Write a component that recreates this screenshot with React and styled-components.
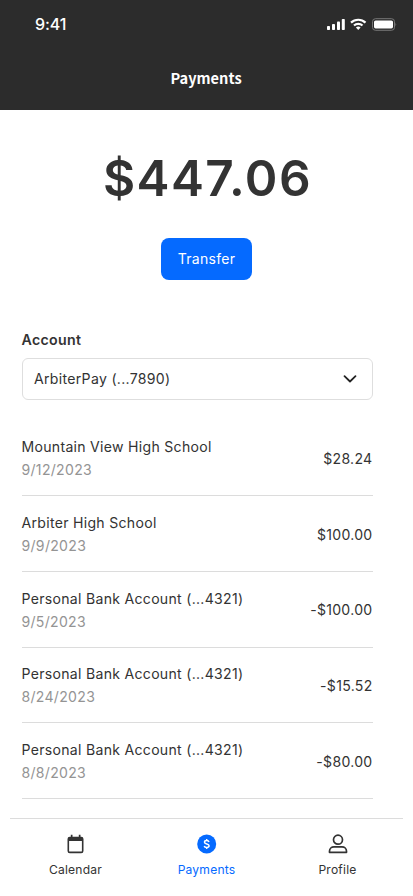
import React from 'react'
import styled, { createGlobalStyle } from 'styled-components'

const GlobalStyle = createGlobalStyle`
* { box-sizing: border-box; }
body {
    margin: 0;
    background: #fff;
    color: #333;
    font-family: Inter, "Liberation Sans", sans-serif;
}
`

const Screen = styled.div`
display: flex;
flex-direction: column;
width: 413px;
height: 896px;
overflow: hidden;
`

const Header = styled.header`
flex: none;
height: 109.5px;
background: #2c2c2c;
color: #fff;
`

const StatusBar = styled.div`
display: flex;
align-items: center;
justify-content: space-between;
height: 48px;
padding: 0 16px 0 35px;
`

const Clock = styled.span`
font-size: 16px;
font-weight: 500;
letter-spacing: -0.1px;
`

const StatusIcons = styled.svg`
display: block;
width: 72px;
height: 16px;
`

const Title = styled.h1`
margin: 0;
text-align: center;
font-family: "Noto Sans CJK JP", "Noto Sans", sans-serif;
font-size: 14.6px;
font-weight: 700;
line-height: 24px;
padding: 18px 1px 0 0;
`

const Main = styled.main`
flex: 1;
padding: 40.5px 40.5px 0 21.5px;
`

const Summary = styled.section`
display: flex;
flex-direction: column;
align-items: center;
margin: 0 -40.5px 0 -21.5px;
`

const Balance = styled.div`
padding-left: 2px;
font-size: 49.5px;
font-weight: 600;
line-height: 56px;
letter-spacing: 1.4px;
`

const TransferButton = styled.button`
width: 91px;
height: 42px;
margin-top: 31.5px;
padding: 0;
border: 0;
border-radius: 8px;
background: #056aff;
color: #fff;
font-family: inherit;
font-size: 14px;
letter-spacing: 0.3px;
`

const Label = styled.div`
margin-top: 50px;
font-size: 14.2px;
font-weight: 600;
line-height: 20px;
letter-spacing: 0.3px;
`

const Select = styled.div`
display: flex;
align-items: center;
justify-content: space-between;
height: 42px;
margin-top: 8px;
padding: 0 14px 0 11.5px;
border: 1px solid #dedede;
border-radius: 6px;
font-size: 14.1px;
letter-spacing: 0.3px;
`

const List = styled.div`
margin-top: 21px;
`

const Row = styled.div`
display: flex;
align-items: center;
justify-content: space-between;
height: 75.7px;
padding-top: 1px;
border-bottom: 1px solid #dcdcdc;
font-size: 14.05px;
line-height: 23px;
letter-spacing: 0.3px;
`

const PaymentDate = styled.div`
color: #949494;
`

const TabBar = styled.nav`
flex: none;
display: flex;
height: 78.5px;
margin: 0 10px;
padding-top: 15px;
border-top: 1px solid #dcdcdc;
background: #fff;
`

const Tab = styled.div`
flex: 1;
display: flex;
flex-direction: column;
align-items: center;
color: ${p => p.$active ? '#056aff' : '#333'};
font-size: 12.1px;
line-height: 16px;
letter-spacing: 0.2px;
svg {
    display: block;
    margin-bottom: 8px;
}
`

const payments = [
    { name: 'Mountain View High School', date: '9/12/2023', amount: '$28.24' },
    { name: 'Arbiter High School', date: '9/9/2023', amount: '$100.00' },
    { name: 'Personal Bank Account (...4321)', date: '9/5/2023', amount: '-$100.00' },
    { name: 'Personal Bank Account (...4321)', date: '8/24/2023', amount: '-$15.52' },
    { name: 'Personal Bank Account (...4321)', date: '8/8/2023', amount: '-$80.00' },
]

const CalendarIcon = () => (
    <svg width="20" height="20" viewBox="0 0 20 20" fill="none">
        <rect x="2.3" y="3.5" width="14.4" height="14.9" rx="1.5" stroke="currentColor" strokeWidth="1.6" />
        <path d="M2 4h15v3H2zM4.800.700h1.700v3H4.800zM12.800.700h1.700v3h-1.700z" fill="currentColor" />
    </svg>
)

const DollarIcon = () => (
    <svg width="20" height="20" viewBox="0 0 20 20" fill="none">
        <circle cx="9.700" cy="10" r="9.500" fill="currentColor" />
        <path d="M12 7.900C11.700 7 10.900 6.600 9.700 6.600c-1.300 0-2.200.6-2.200 1.600 0 2.300 4.600 1.200 4.600 3.600 0 1-.9 1.700-2.400 1.700-1.300 0-2.200-.5-2.500-1.500M9.700 5v1.600M9.700 13.500V15" stroke="#fff" strokeWidth="1.500" />
    </svg>
)

const ProfileIcon = () => (
    <svg width="20" height="20" viewBox="0 0 20 20" fill="none" stroke="currentColor" strokeWidth="1.7">
        <circle cx="10" cy="5.700" r="4.500" />
        <path d="M1.500 18.300v-1.100c0-2.500 2-4.300 4.500-4.300h8c2.500 0 4.500 1.800 4.500 4.300v1.100z" strokeLinejoin="round" />
    </svg>
)

export default function App() {
    return (
        <Screen>
            <GlobalStyle />
            <Header>
                <StatusBar>
                    <Clock>9:41</Clock>
                    <StatusIcons viewBox="0 0 72 16" fill="#fff">
                        <rect x="2" y="10" width="3" height="4" rx=".8" />
                        <rect x="7" y="8" width="3" height="6" rx=".8" />
                        <rect x="12" y="5.500" width="3" height="8.500" rx=".8" />
                        <rect x="16.800" y="3" width="3" height="11" rx=".8" />
                        <g fill="none" stroke="#fff" strokeWidth="2.200">
                            <path d="M26 6.600a10.600 10.600 0 0 1 14.500 0" />
                            <path d="M29 9.500a6.100 6.100 0 0 1 8.500 0" />
                        </g>
                        <path d="M30.900 11.600a3.600 3.600 0 0 1 4.700 0L33.250 14z" />
                        <rect x="47.500" y="2.700" width="22" height="11.600" rx="3" fill="none" stroke="#777" />
                        <rect x="49" y="4.400" width="19" height="8" rx="1.600" />
                        <path d="M70.500 6.800q1.500 1.700 0 3.400z" fill="#777" />
                    </StatusIcons>
                </StatusBar>
                <Title>Payments</Title>
            </Header>
            <Main>
                <Summary>
                    <Balance>$447.06</Balance>
                    <TransferButton>Transfer</TransferButton>
                </Summary>
                <Label>Account</Label>
                <Select>
                    ArbiterPay (...7890)
                    <svg width="16" height="16" viewBox="0 0 16 16" fill="none">
                        <path d="M2.500 5.200l5.500 5.300 5.500-5.300" stroke="#222" strokeWidth="1.800" strokeLinecap="round" strokeLinejoin="round" />
                    </svg>
                </Select>
                <List>
                    {payments.map(p => (
                        <Row key={p.date}>
                            <div>
                                <div>{p.name}</div>
                                <PaymentDate>{p.date}</PaymentDate>
                            </div>
                            <div>{p.amount}</div>
                        </Row>
                    ))}
                </List>
            </Main>
            <TabBar>
                <Tab><CalendarIcon />Calendar</Tab>
                <Tab $active><DollarIcon />Payments</Tab>
                <Tab><ProfileIcon />Profile</Tab>
            </TabBar>
        </Screen>
    )
}
